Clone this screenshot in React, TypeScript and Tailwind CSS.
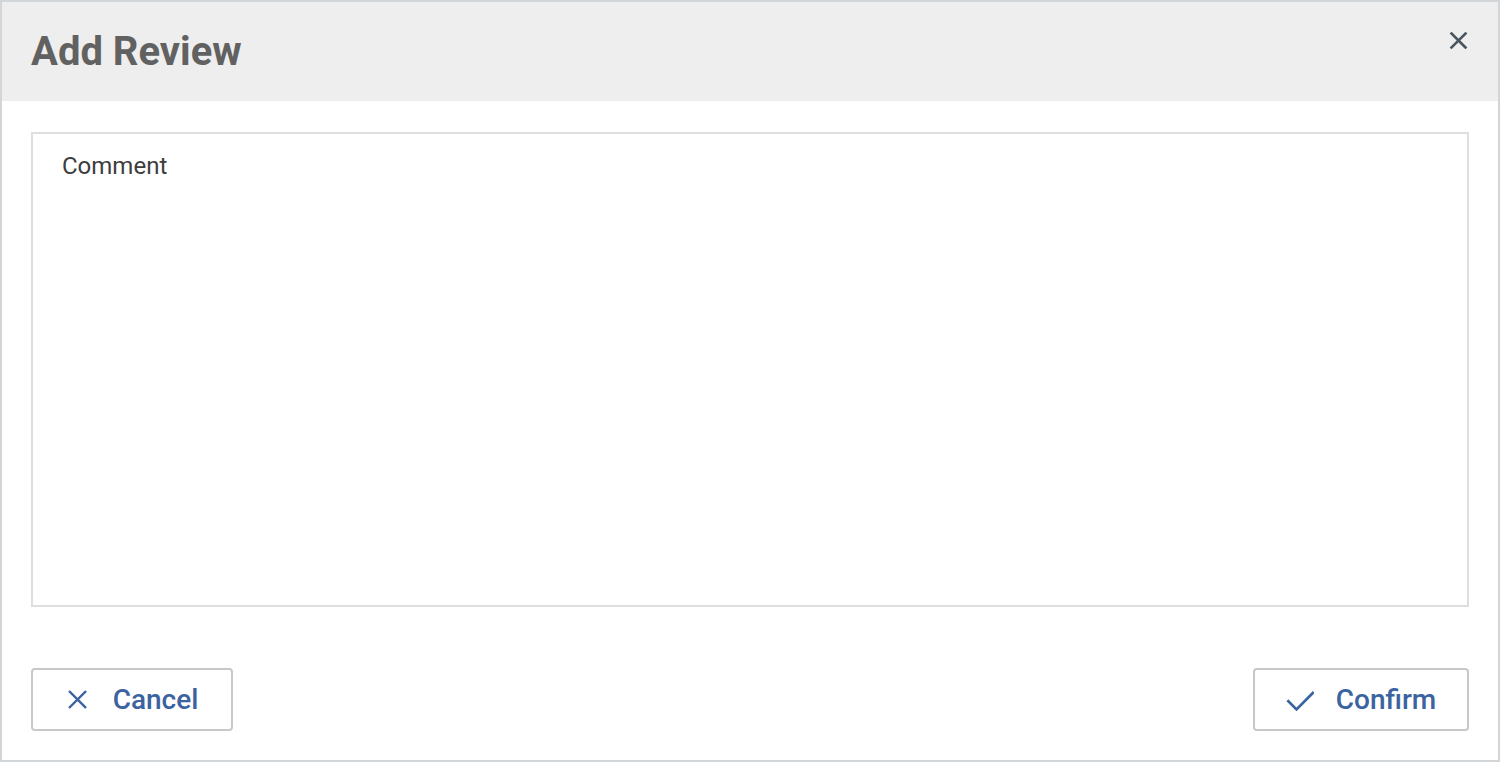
import { useState } from 'react';

function XIcon({ className, weight = 2.5 }: { className?: string; weight?: number }) {
  return (
    <svg viewBox="0 0 24 24" fill="none" stroke="currentColor" strokeWidth={weight} strokeLinecap="square" className={className}>
      <path d="M4 4l16 16M20 4L4 20" />
    </svg>
  );
}

function CheckIcon({ className }: { className?: string }) {
  return (
    <svg viewBox="0 0 24 24" fill="none" stroke="currentColor" strokeWidth={2.3} strokeLinecap="square" className={className}>
      <path d="M2 13l7 7L23 6" />
    </svg>
  );
}

export default function App() {
  const [comment, setComment] = useState('');

  return (
    <div className="h-[762px] w-[1500px] bg-white border-2 border-[#d3d6d9] flex flex-col font-['Roboto',sans-serif]">
      {/* header */}
      <div className="h-[99px] bg-[#eeeeee] flex items-start justify-between pl-[29px] pr-[29px]">
        <h1 className="mt-[27px] text-[40px] leading-[46px] font-bold text-[#616161]">Add Review</h1>
        <button className="mt-[28px] text-[#4b5560]">
          <XIcon className="w-[21px] h-[21px]" weight={3} />
        </button>
      </div>

      {/* body */}
      <div className="flex-1 flex flex-col px-[29px] pt-[31px] pb-[29px]">
        <textarea
          value={comment}
          onChange={(e) => setComment(e.target.value)}
          placeholder="Comment"
          className="h-[475px] w-full resize-none border-2 border-[#dedede] px-[29px] pt-[17px] text-[24px] leading-[30px] text-[#3d3d3d] placeholder:text-[#3d3d3d] outline-none"
        />

        <div className="mt-auto flex justify-between">
          <button className="h-[63px] w-[202px] flex items-center justify-center gap-[24px] border-2 border-[#c8c8c8] rounded-[4px] text-[#3b63a0] text-[28px] font-medium">
            <XIcon className="w-[23px] h-[23px]" />
            Cancel
          </button>
          <button className="h-[63px] w-[216px] flex items-center justify-center gap-[22px] border-2 border-[#c8c8c8] rounded-[4px] text-[#3b63a0] text-[28px] font-medium">
            <CheckIcon className="w-[28px] h-[28px]" />
            Confirm
          </button>
        </div>
      </div>
    </div>
  );
}
